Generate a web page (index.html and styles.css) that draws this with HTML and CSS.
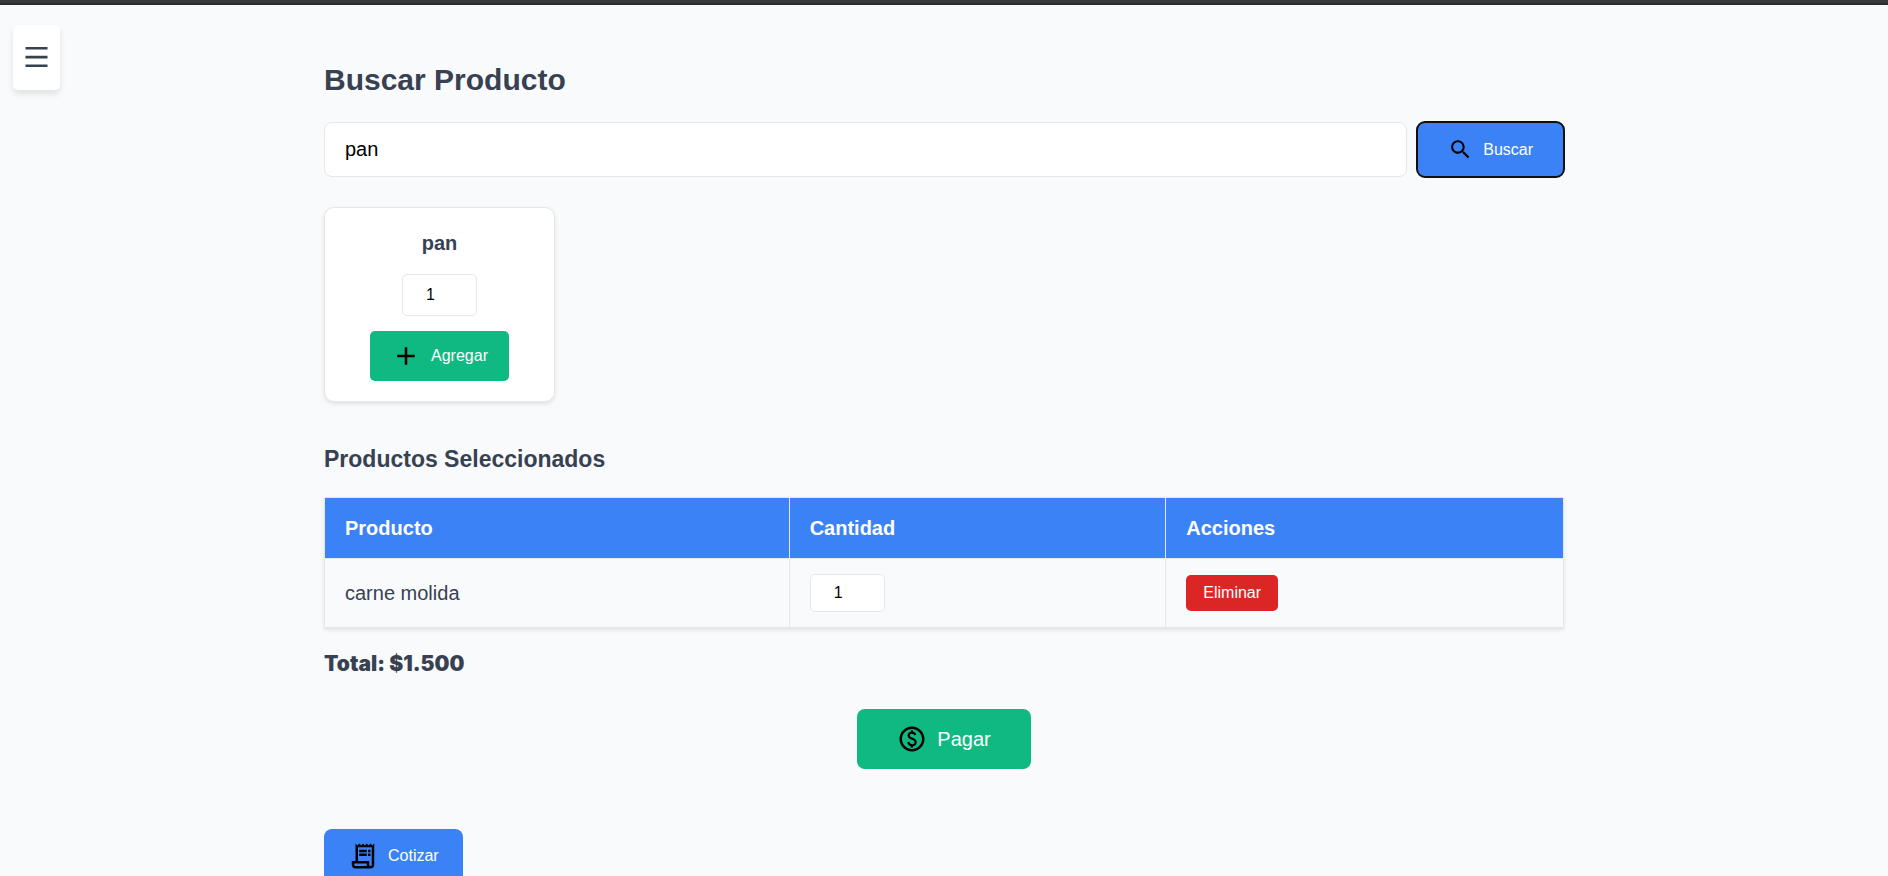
FILE: index.html
```
<!DOCTYPE html>
<html lang="es">
<head>
<meta charset="utf-8">
<title>Buscar Producto</title>
<link rel="stylesheet" href="styles.css">
</head>
<body>
<div class="top-strip"></div>
<button class="menu-toggle" type="button" aria-label="Menú">
  <svg viewBox="0 0 24 22" width="24" height="22" aria-hidden="true"><path d="M.5 1h22v2.6H.5zM.5 9.7h22v2.8H.5zM.5 18.5h22v2.6H.5z"/></svg>
</button>
<main class="container">
  <h2 class="title">Buscar Producto</h2>
  <form class="search" onsubmit="return false">
    <input class="search-input" type="text" value="pan" aria-label="Buscar producto">
    <button class="btn btn-search" type="button">
      <svg class="icon-small" viewBox="0 0 24 24" aria-hidden="true"><path d="M15.5 14h-.79l-.28-.27C15.41 12.59 16 11.11 16 9.5 16 5.91 13.09 3 9.5 3S3 5.91 3 9.5 5.91 16 9.5 16c1.61 0 3.09-.59 4.23-1.57l.27.28v.79l5 4.99L20.49 19l-4.99-5zm-6 0C7.01 14 5 11.99 5 9.5S7.01 5 9.5 5 14 7.01 14 9.5 11.99 14 9.5 14z"/></svg>
      Buscar
    </button>
  </form>

  <section class="results">
    <article class="card">
      <h3 class="card-title">pan</h3>
      <input class="quantity" type="number" value="1" min="1" aria-label="Cantidad de pan">
      <button class="btn btn-add" type="button">
        <svg class="icon" viewBox="0 0 24 24" aria-hidden="true"><path d="M19 13h-6v6h-2v-6H5v-2h6V5h2v6h6v2z"/></svg>
        Agregar
      </button>
    </article>
  </section>

  <h3 class="subtitle">Productos Seleccionados</h3>
  <table class="products">
    <thead>
      <tr><th class="col-product">Producto</th><th class="col-quantity">Cantidad</th><th>Acciones</th></tr>
    </thead>
    <tbody>
      <tr>
        <td>carne molida</td>
        <td><input class="quantity quantity-row" type="number" value="1" min="1" aria-label="Cantidad de carne molida"></td>
        <td><button class="btn btn-remove" type="button">Eliminar</button></td>
      </tr>
    </tbody>
  </table>
  <p class="total">Total: $1.500</p>

  <div class="pay-row">
    <button class="btn btn-pay" type="button">
      <svg class="icon" viewBox="0 0 24 24" aria-hidden="true"><path d="M12 2C6.48 2 2 6.48 2 12s4.48 10 10 10 10-4.48 10-10S17.52 2 12 2zm0 18c-4.41 0-8-3.59-8-8s3.59-8 8-8 8 3.59 8 8-3.59 8-8 8zm.89-8.9c-1.78-.59-2.64-.96-2.64-1.9 0-1.02 1.11-1.39 1.81-1.39 1.31 0 1.79.99 1.9 1.34l1.58-.67c-.15-.44-.82-1.91-2.66-2.23V5h-1.75v1.26c-2.6.56-2.62 2.85-2.62 2.96 0 2.27 2.25 2.91 3.35 3.31 1.58.56 2.28 1.07 2.28 2.03 0 1.13-1.05 1.61-1.98 1.61-1.82 0-2.34-1.87-2.4-2.09l-1.66.67c.63 2.19 2.28 2.78 2.9 2.96V19h1.75v-1.24c.52-.09 3.02-.59 3.02-3.22.01-1.39-.6-2.61-3.01-3.44z"/></svg>
      Pagar
    </button>
  </div>
  <button class="btn btn-quote" type="button">
    <svg class="icon" viewBox="0 0 24 24" aria-hidden="true"><path d="M19.5 3.5L18 2l-1.5 1.5L15 2l-1.5 1.5L12 2l-1.5 1.5L9 2 7.5 3.5 6 2v14H3v3c0 1.66 1.34 3 3 3h12c1.66 0 3-1.34 3-3V2l-1.5 1.5zM15 20H6c-.55 0-1-.45-1-1v-1h10v2zm4-1c0 .55-.45 1-1 1s-1-.45-1-1v-3H8V5h11v14zM9 7h6v2H9zM16 7h2v2h-2zM9 10h6v2H9zM16 10h2v2h-2z"/></svg>
    Cotizar
  </button>
</main>
</body>
</html>
```

FILE: styles.css
```
* {
  box-sizing: border-box;
}

html {
  scrollbar-width: none;
}

body {
  margin: 0;
  height: 100vh;
  overflow-y: auto;
  scrollbar-width: none;
  background: #f9fafb;
  color: #374151;
  font-family: "Liberation Sans", Arial, sans-serif;
  font-size: 20px;
  line-height: 30px;
}

.top-strip {
  height: 5px;
  background: #3a393e;
  border-bottom: 2px solid #2c2b30;
}

.menu-toggle {
  position: fixed;
  top: 25px;
  left: 13px;
  display: flex;
  padding: 21px 11px 22px 12px;
  border: 0;
  border-radius: 5px;
  background: #fff;
  box-shadow: 0 4px 6px rgba(0, 0, 0, 0.1);
  fill: #374151;
}

.container {
  max-width: 1280px;
  margin: 0 auto;
  padding: 55px 20px 20px;
}

.title {
  margin: 0 0 22px;
  font-size: 30px;
  line-height: 40px;
}

.search {
  display: flex;
  gap: 10px;
  margin-bottom: 30px;
}

.search-input {
  flex: 1;
  min-width: 0;
  padding: 15px 20px;
  border: 1px solid #e5e7eb;
  border-radius: 8px;
  background: #fff;
  color: #000;
  font: inherit;
  line-height: 23px;
}

.btn {
  display: inline-flex;
  align-items: center;
  justify-content: center;
  gap: 10px;
  border: 0;
  border-radius: 5px;
  color: #fff;
  font-family: inherit;
  font-size: 16px;
  line-height: 18px;
}

.icon {
  width: 30px;
  height: 30px;
  fill: #000;
}

.icon-small {
  width: 25px;
  height: 25px;
  fill: #000;
}

.btn-search {
  padding: 15px 31px;
  border-radius: 8px;
  background: #3b82f6;
  outline: 2px solid #101010;
  outline-offset: -1px;
}

.results {
  display: flex;
  gap: 20px;
}

.card {
  display: flex;
  flex-direction: column;
  align-items: center;
  gap: 15px;
  min-width: 231px;
  padding: 20px;
  border: 1px solid #e5e7eb;
  border-radius: 10px;
  background: #fff;
  box-shadow: 0 2px 4px rgba(0, 0, 0, 0.1);
}

.card-title {
  margin: 0;
  font-size: 20px;
  line-height: 31px;
}

.quantity {
  display: block;
  width: 75px;
  height: 42px;
  padding: 0 23px;
  border: 1px solid #e5e7eb;
  border-radius: 5px;
  background: #fff;
  color: #000;
  font-family: inherit;
  font-size: 16px;
  appearance: textfield;
}

.quantity-row {
  height: 38px;
}

.btn-add {
  padding: 10px 21px;
  background: #10b981;
}

.subtitle {
  margin: 42px 0 23px;
  font-size: 23px;
}

.products {
  width: 100%;
  border-collapse: collapse;
  box-shadow: 0 2px 4px rgba(0, 0, 0, 0.1);
}

.products th,
.products td {
  padding: 15px 20px;
  border: 1px solid #e5e7eb;
  text-align: left;
}

.products th {
  background: #3b82f6;
  color: #fff;
}

.col-product {
  width: 37.5%;
}

.col-quantity {
  width: 30.4%;
}

.btn-remove {
  display: flex;
  padding: 9px 17px;
  background: #dc2626;
}

.total {
  margin: 21px 0 30px;
  font-family: Inter, "Liberation Sans", sans-serif;
  font-size: 21px;
  font-weight: 900;
}

.pay-row {
  display: flex;
  justify-content: center;
  margin-bottom: 60px;
}

.btn-pay {
  padding: 15px 40px;
  border-radius: 8px;
  background: #10b981;
  font-size: 20px;
}

.btn-quote {
  padding: 12px 24px;
  border-radius: 8px;
  background: #3b82f6;
}
```
